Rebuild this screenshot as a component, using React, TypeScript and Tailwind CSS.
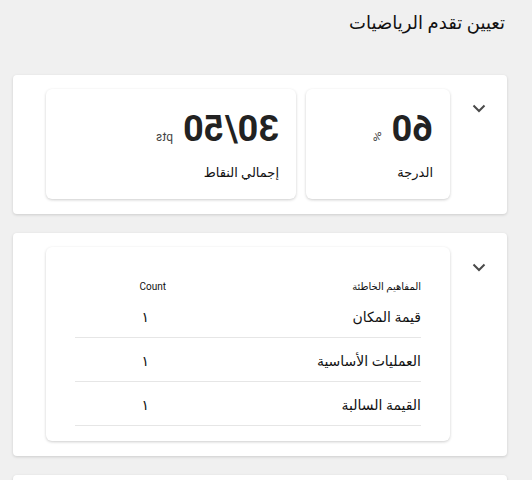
const font = { fontFamily: "Roboto, 'DejaVu Sans', sans-serif" };

const Chevron = () => (
  <svg width="14" height="9" viewBox="0 0 14 9" fill="none" className="text-[#4a4a4a]">
    <path d="M1.5 1.5 L7 7 L12.5 1.5" stroke="currentColor" strokeWidth="2" />
  </svg>
);

const StatCard = ({ value, unit, label, className }: { value: string; unit: string; label: string; className: string }) => {
  return (
    <div className={`bg-white rounded-md shadow-[0_1px_3px_rgba(0,0,0,0.2)] px-[17px] pt-[20px] pb-[16px] ${className}`}>
      <div dir="ltr" className="flex items-baseline gap-[10px] -scale-x-100">
        <span className="text-[36px] leading-[40px] font-bold text-[#222]">{value}</span>
        <span className="text-[12px] text-[#444]">{unit}</span>
      </div>
      <div className="mt-[14px] text-[13px] leading-[20px] font-medium text-[#111]">{label}</div>
    </div>
  );
};

const rows = ["قيمة المكان", "العمليات الأساسية", "القيمة السالبة"];

export default function App() {
  return (
    <div dir="rtl" style={font} className="h-screen overflow-hidden bg-[#f0f0f0] pl-[13px] pr-[25px] pt-[10px]">
      <h1 className="text-[18px] leading-[26px] font-normal text-[#111] pr-[2px]">تعيين تقدم الرياضيات</h1>

      <div className="mt-[39px] bg-white rounded shadow-[0_1px_3px_rgba(0,0,0,0.15)] flex pt-[14px] pb-[15px] pl-[33px]">
        <div className="w-[57px] shrink-0 flex justify-center pt-[15px]">
          <Chevron />
        </div>
        <div className="flex-1 flex gap-[10px]">
          <StatCard value="60" unit="%" label="الدرجة" className="w-[144px] shrink-0" />
          <StatCard value="30/50" unit="pts" label="إجمالي النقاط" className="flex-1" />
        </div>
      </div>

      <div className="mt-[19px] bg-white rounded shadow-[0_1px_3px_rgba(0,0,0,0.15)] flex pt-[14px] pb-[15px] pl-[33px]">
        <div className="w-[57px] shrink-0 flex justify-center pt-[16px]">
          <Chevron />
        </div>
        <div className="flex-1 bg-white rounded-md shadow-[0_1px_3px_rgba(0,0,0,0.2)] pt-[31px] pb-[15px] pr-[29px] pl-[29px]">
          <div className="flex h-[16px] items-center text-[10px] text-[#111]">
            <div className="flex-1 font-medium">المفاهيم الخاطئة</div>
            <div className="w-[150px] pr-[59px]">Count</div>
          </div>
          {rows.map((r) => (
            <div key={r} className="flex h-[44px] items-center pt-[4px] border-b border-[#e6e6e6] text-[14px] text-[#111]">
              <div className="flex-1">{r}</div>
              <div className="w-[150px] pr-[76px]">١</div>
            </div>
          ))}
        </div>
      </div>

      <div className="mt-[19px] bg-white rounded-t shadow-[0_1px_3px_rgba(0,0,0,0.15)] h-[40px]"></div>
    </div>
  );
}
